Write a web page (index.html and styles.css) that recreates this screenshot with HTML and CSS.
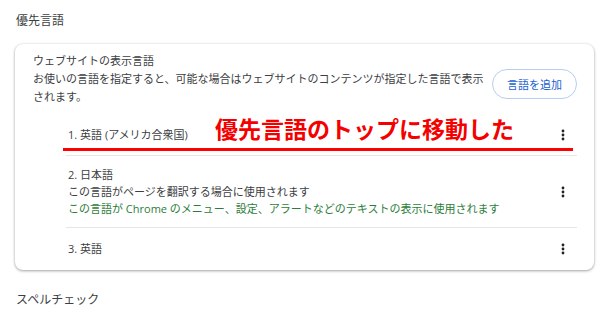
FILE: index.html
```html
<!DOCTYPE html>
<html lang="ja">
<head>
<meta charset="utf-8">
<meta name="viewport" content="width=device-width, initial-scale=1">
<link rel="stylesheet" href="styles.css">
</head>
<body>
<div class="page">
  <h2 class="section-title">優先言語</h2>

  <div class="card">
    <div class="card-head">
      <div class="desc">
        <div>ウェブサイトの表示言語</div>
        <div>お使いの言語を指定すると、可能な場合はウェブサイトのコンテンツが指定した言語で表示されます。</div>
      </div>
      <button class="add-button">言語を追加</button>
    </div>

    <ul class="lang-list">
      <li class="lang-row">
        <div class="lang-text">1. 英語 (アメリカ合衆国)</div>
        <span class="kebab"><svg width="4" height="12" viewBox="0 0 4 12"><circle cx="2" cy="2" r="1.4"/><circle cx="2" cy="6" r="1.4"/><circle cx="2" cy="10" r="1.4"/></svg></span>
      </li>
      <li class="lang-row">
        <div class="lang-text">
          <div>2. 日本語</div>
          <div>この言語がページを翻訳する場合に使用されます</div>
          <div class="ui-note">この言語が Chrome のメニュー、設定、アラートなどのテキストの表示に使用されます</div>
        </div>
        <span class="kebab"><svg width="4" height="12" viewBox="0 0 4 12"><circle cx="2" cy="2" r="1.4"/><circle cx="2" cy="6" r="1.4"/><circle cx="2" cy="10" r="1.4"/></svg></span>
      </li>
      <li class="lang-row">
        <div class="lang-text">3. 英語</div>
        <span class="kebab"><svg width="4" height="12" viewBox="0 0 4 12"><circle cx="2" cy="2" r="1.4"/><circle cx="2" cy="6" r="1.4"/><circle cx="2" cy="10" r="1.4"/></svg></span>
      </li>
    </ul>

    <!-- annotation over the first row -->
    <div class="note">優先言語のトップに移動した</div>
    <div class="note-line"></div>
  </div>

  <h2 class="section-title spell">スペルチェック</h2>
</div>
</body>
</html>
```

FILE: styles.css
```css
* {
  box-sizing: border-box;
}

body {
  margin: 0;
  background: #fff;
  color: #3c4043;
  font-family: "Open Sans", "Noto Sans CJK JP", sans-serif;
  font-size: 11px;
}

.page {
  padding: 0 6px 0 15px;
}

.section-title {
  font-size: 12px;
  font-weight: normal;
  line-height: 18px;
  margin: 12px 0 14px 1px;
  color: #3c4043;
}

.section-title.spell {
  margin-top: 21px;
}

.card {
  position: relative;
  border-radius: 8px;
  background: #fff;
  box-shadow: 0 1px 3px rgba(0, 0, 0, 0.35), 0 0 2px rgba(0, 0, 0, 0.08);
  padding: 8px 17px 0 18px;
}

.card-head {
  display: flex;
  align-items: flex-start;
  justify-content: space-between;
}

.desc {
  width: 452px;
  line-height: 18px;
}

.add-button {
  flex: none;
  margin-top: 17px;
  width: 85px;
  height: 30px;
  border: 1px solid #b6cdf2;
  border-radius: 15px;
  background: #fff;
  color: #1a62d0;
  font-family: inherit;
  font-size: 11px;
  padding: 0;
}

.lang-list {
  list-style: none;
  margin: 8px 0 0 33px;
  padding: 0;
}

.lang-row {
  display: flex;
  align-items: center;
  justify-content: space-between;
  min-height: 42px;
  padding: 10px 0 10px 2px;
  border-bottom: 1px solid #e6e6e6;
}

.lang-row:last-child {
  border-bottom: none;
}

.lang-text {
  line-height: 17px;
}

.lang-row:first-child .lang-text,
.lang-row:last-child .lang-text {
  line-height: 18px;
}

.ui-note {
  color: #2d7d3a;
}

.kebab {
  display: flex;
  align-items: center;
  justify-content: center;
  width: 24px;
  margin-right: 2px;
}

.kebab svg {
  fill: #202124;
}

.note {
  position: absolute;
  left: 200px;
  top: 73px;
  color: #f50000;
  font-family: "Noto Sans CJK JP", sans-serif;
  font-weight: bold;
  font-size: 23px;
  line-height: 1;
}

.note-line {
  position: absolute;
  left: 48px;
  top: 104px;
  width: 510px;
  height: 3px;
  background: #f00;
}
```
